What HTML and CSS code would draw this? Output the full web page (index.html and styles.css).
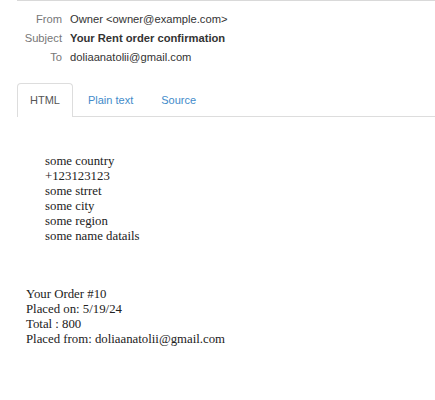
FILE: index.html
```html
<!DOCTYPE html>
<html>
<head>
<meta charset="utf-8">
<link rel="stylesheet" href="styles.css">
</head>
<body>
<div class="message">
  <div class="headers">
    <div class="row"><span class="label">From</span><span class="value">Owner &lt;owner@example.com&gt;</span></div>
    <div class="row"><span class="label">Subject</span><span class="value subject">Your Rent order confirmation</span></div>
    <div class="row"><span class="label">To</span><span class="value">doliaanatolii@gmail.com</span></div>
  </div>
  <ul class="tabs">
    <li class="tab active">HTML</li>
    <li class="tab">Plain text</li>
    <li class="tab">Source</li>
  </ul>
</div>
<div class="mail-body">
  <div class="address">
    <div>some country</div>
    <div>+123123123</div>
    <div>some strret</div>
    <div>some city</div>
    <div>some region</div>
    <div>some name datails</div>
  </div>
  <div class="order">
    <div>Your Order #10</div>
    <div>Placed on: 5/19/24</div>
    <div>Total : 800</div>
    <div>Placed from: doliaanatolii@gmail.com</div>
  </div>
</div>
</body>
</html>
```
FILE: styles.css
```css
html, body {
  margin: 0;
  padding: 0;
  background: #fff;
}
.message {
  margin-left: 17px;
  font-family: "Liberation Sans", Arial, sans-serif;
  font-size: 11px;
}
.headers {
  border-top: 1px solid #d9d9d9;
  padding-top: 9px;
  font-size: 11.2px;
}
.row {
  display: flex;
  height: 19px;
  line-height: 19px;
}
.label {
  width: 45px;
  text-align: right;
  color: #777;
  margin-right: 8px;
}
.value {
  color: #333;
}
.subject {
  font-weight: bold;
}
.tabs {
  list-style: none;
  margin: 16px 0 0 0;
  padding: 0;
  display: flex;
  border-bottom: 1px solid #ddd;
}
.tab {
  padding: 0 12px;
  height: 32px;
  line-height: 33px;
  border: 1px solid transparent;
  border-bottom: none;
  border-radius: 4px 4px 0 0;
  margin-right: 2px;
  margin-bottom: -1px;
  color: #428bca;
}
.tab.active {
  border-color: #ddd;
  background: #fff;
  color: #555;
  height: 33px;
}
.mail-body {
  font-family: "Liberation Serif", "Times New Roman", serif;
  font-size: 12.8px;
  line-height: 15px;
  color: #222;
  padding: 37px 0 0 26px;
}
.address {
  padding-left: 19px;
}
.order {
  margin-top: 43px;
}
```
